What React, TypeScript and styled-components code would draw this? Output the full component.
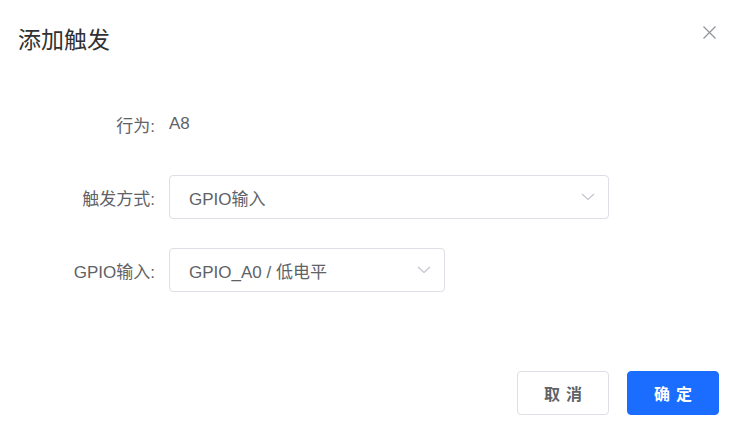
import React from "react";
import styled, { createGlobalStyle } from "styled-components";

const GlobalStyle = createGlobalStyle`
  html, body {
    margin: 0;
    padding: 0;
    background: #ffffff;
  }
  body {
    font-family: "Liberation Sans", "Noto Sans CJK SC", sans-serif;
  }
`;

const Dialog = styled.div`
  width: 740px;
  height: 435px;
  box-sizing: border-box;
  display: flex;
  flex-direction: column;
  background: #fff;
`;

const Header = styled.div`
  display: flex;
  align-items: center;
  justify-content: space-between;
  height: 40px;
  padding: 20px 24px 0 18px;
`;

const Title = styled.span`
  font-size: 23px;
  color: #303133;
  line-height: 40px;
`;

const CloseButton = styled.button`
  border: none;
  background: none;
  padding: 0;
  width: 14px;
  height: 14px;
  display: flex;
  align-items: center;
  justify-content: center;
  cursor: pointer;
  margin-top: -16px;
`;

const Body = styled.div`
  display: flex;
  flex-direction: column;
  gap: 29px;
  padding-top: 42px;
`;

const FormRow = styled.div`
  display: flex;
  align-items: center;
  height: 44px;
`;

const Label = styled.label`
  width: 155px;
  padding-right: 14px;
  box-sizing: content-box;
  text-align: right;
  font-size: 17px;
  color: #606266;
`;

const Value = styled.span`
  font-size: 17px;
  color: #606266;
`;

const Select = styled.div<{ width: number }>`
  width: ${(p) => p.width}px;
  height: 44px;
  box-sizing: border-box;
  border: 1px solid #dcdfe6;
  border-radius: 4px;
  display: flex;
  align-items: center;
  justify-content: space-between;
  padding: 0 13px 0 19px;
  font-size: 17px;
  color: #606266;
  cursor: pointer;
`;

const Footer = styled.div`
  margin-top: auto;
  display: flex;
  justify-content: flex-end;
  gap: 18px;
  padding: 0 21px 20px 0;
`;

const Button = styled.button<{ primary?: boolean }>`
  width: 92px;
  height: 44px;
  box-sizing: border-box;
  border-radius: 4px;
  border: 1px solid ${(p) => (p.primary ? "#1a6dff" : "#dcdfe6")};
  background: ${(p) => (p.primary ? "#1a6dff" : "#fff")};
  color: ${(p) => (p.primary ? "#fff" : "#606266")};
  font-family: "Noto Sans CJK SC", sans-serif;
  font-size: 16px;
  font-weight: 700;
  letter-spacing: 6px;
  text-indent: 6px;
  cursor: pointer;
`;

function Chevron() {
  return (
    <svg width="14" height="8" viewBox="0 0 14 8" fill="none">
      <path d="M1 1l6 5.5L13 1" stroke="#c0c4cc" strokeWidth="1.1" />
    </svg>
  );
}

export default function App() {
  return (
    <>
      <GlobalStyle />
      <Dialog>
        <Header>
          <Title>添加触发</Title>
          <CloseButton aria-label="关闭">
            <svg width="13" height="13" viewBox="0 0 13 13">
              <path d="M0.5 0.5l12 12M12.5 0.5l-12 12" stroke="#909399" strokeWidth="1.2" />
            </svg>
          </CloseButton>
        </Header>
        <Body>
          <FormRow>
            <Label>行为:</Label>
            <Value>A8</Value>
          </FormRow>
          <FormRow>
            <Label>触发方式:</Label>
            <Select width={440}>
              <span>GPIO输入</span>
              <Chevron />
            </Select>
          </FormRow>
          <FormRow>
            <Label>GPIO输入:</Label>
            <Select width={276}>
              <span>GPIO_A0 / 低电平</span>
              <Chevron />
            </Select>
          </FormRow>
        </Body>
        <Footer>
          <Button>取消</Button>
          <Button primary>确定</Button>
        </Footer>
      </Dialog>
    </>
  );
}
